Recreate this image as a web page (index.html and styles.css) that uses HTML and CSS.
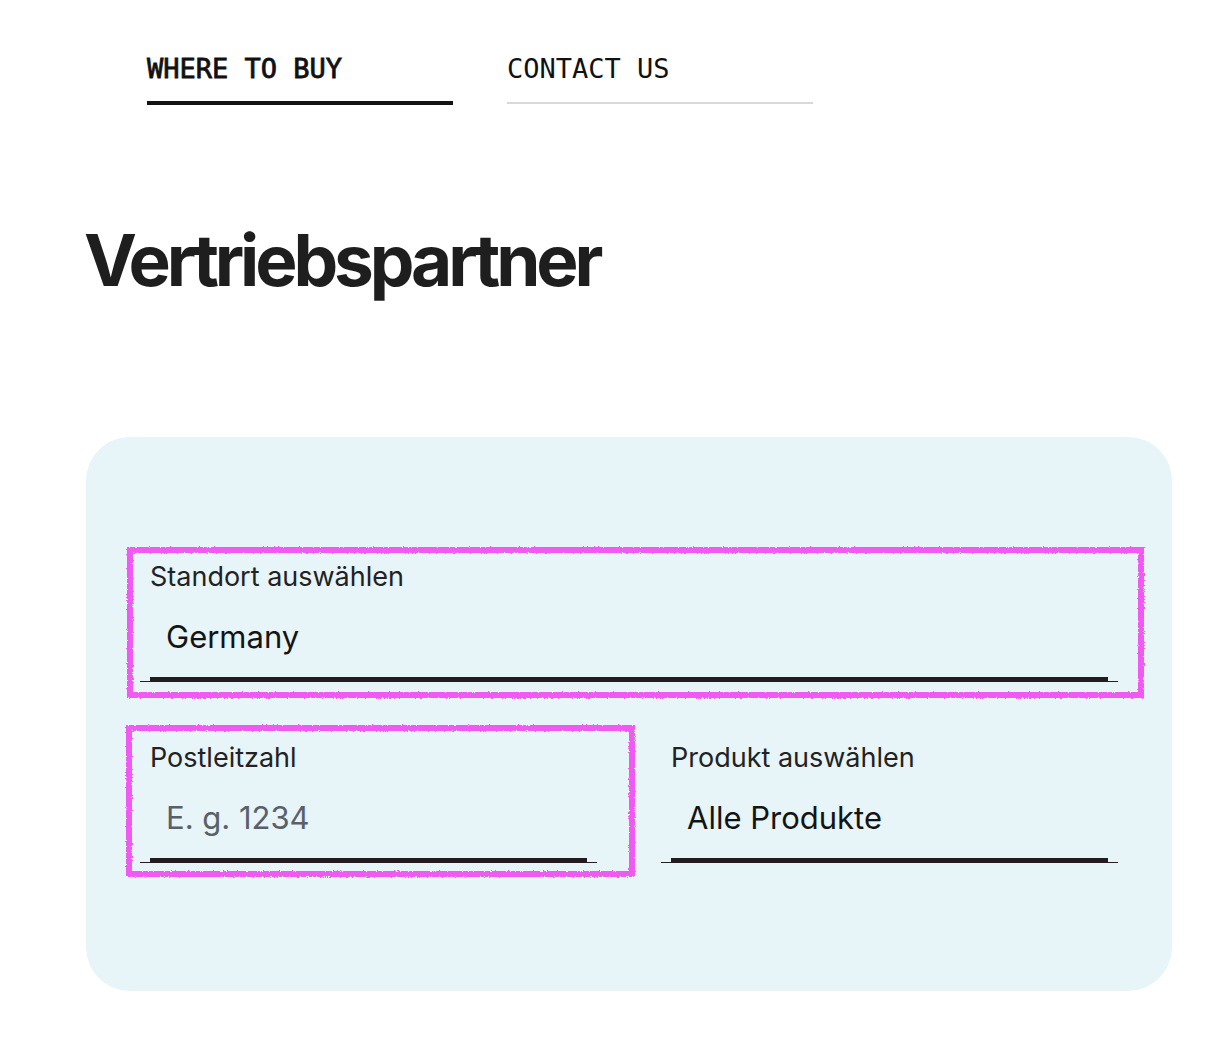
FILE: index.html
```html
<!DOCTYPE html>
<html lang="de">
<head>
<meta charset="utf-8">
<title>Vertriebspartner</title>
<link rel="stylesheet" href="styles.css">
</head>
<body>
<svg class="defs" aria-hidden="true">
  <filter id="rough" x="-5%" y="-5%" width="110%" height="110%">
    <feTurbulence type="fractalNoise" baseFrequency="0.8" numOctaves="2" seed="3" result="noise"/>
    <feDisplacementMap in="SourceGraphic" in2="noise" scale="3" xChannelSelector="R" yChannelSelector="G"/>
  </filter>
</svg>
<nav class="tabs">
  <a class="tab tab-active">WHERE TO BUY</a>
  <a class="tab">CONTACT US</a>
</nav>
<main class="page">
  <h1 class="title">Vertriebspartner</h1>
  <section class="finder">
    <div class="field">
      <span class="field-label">Standort auswählen</span>
      <div class="field-control">Germany</div>
    </div>
    <div class="field-row">
      <div class="field">
        <span class="field-label">Postleitzahl</span>
        <div class="field-control field-placeholder">E. g. 1234</div>
      </div>
      <div class="field">
        <span class="field-label">Produkt auswählen</span>
        <div class="field-control">Alle Produkte</div>
      </div>
    </div>
    <div class="mark mark-location"></div>
    <div class="mark mark-zip"></div>
  </section>
</main>
</body>
</html>
```

FILE: styles.css
```css
html, body {
  margin: 0;
  padding: 0;
  background: #ffffff;
}

body {
  font-family: Inter, "Noto Sans", sans-serif;
  color: #1f1f1f;
}

.defs {
  position: absolute;
  width: 0;
  height: 0;
  overflow: hidden;
}

.tabs {
  display: flex;
  gap: 54px;
  padding: 53px 0 0 147px;
  align-items: flex-start;
}

.tab {
  width: 306px;
  font-family: "DejaVu Sans Mono", "Liberation Mono", monospace;
  font-size: 27px;
  line-height: 32px;
  color: #111111;
  padding-bottom: 17px;
  border-bottom: 2px solid #d9d9d9;
}

.tab-active {
  -webkit-text-stroke: 0.8px #111111;
  padding-bottom: 16px;
  border-bottom: 4px solid #161213;
}

.page {
  padding-left: 86px;
}

.title {
  margin: 116px 0 0 -2px;
  font-family: Inter, "Noto Sans", sans-serif;
  font-weight: 700;
  font-size: 71px;
  line-height: 79px;
  letter-spacing: -0.058em;
  color: #1e1e1e;
}

.finder {
  position: relative;
  margin-top: 137px;
  width: 1086px;
  box-sizing: border-box;
  padding: 123px 54px 128px;
  background: #e7f4f8;
  border-radius: 44px;
}

.field {
  border-bottom: 1px solid #231f20;
}

.field-label {
  display: block;
  padding-left: 10px;
  font-size: 27px;
  line-height: 34px;
  color: #222222;
}

.field-control {
  margin: 0 10px;
  padding: 23px 0 20px 16px;
  border-bottom: 4px solid #221c21;
  font-size: 31px;
  line-height: 40px;
  color: #141414;
}

.field-placeholder {
  color: #59606a;
}

.field-row {
  display: grid;
  grid-template-columns: 1fr 1fr;
  column-gap: 64px;
  margin-top: 59px;
}

.mark {
  position: absolute;
  box-sizing: border-box;
  border: 6px solid #f05af2;
  filter: url(#rough);
  pointer-events: none;
}

.mark-location {
  left: 41px;
  top: 110px;
  width: 1017px;
  height: 151px;
}

.mark-zip {
  left: 40px;
  top: 288px;
  width: 509px;
  height: 152px;
}
```
